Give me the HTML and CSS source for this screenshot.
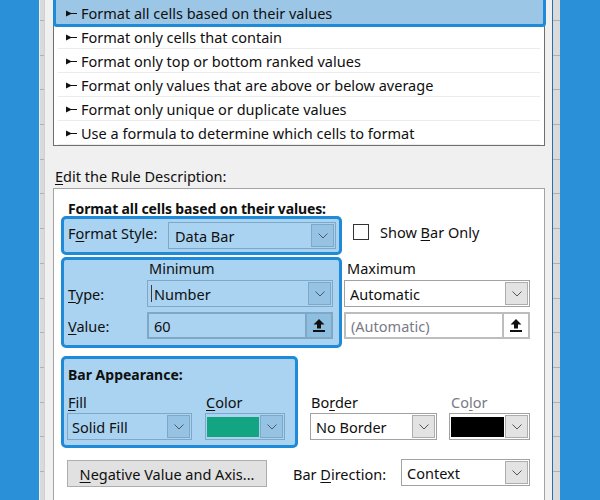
FILE: index.html
```html
<!DOCTYPE html>
<html>
<head>
<meta charset="utf-8">
<link rel="stylesheet" href="styles.css">
</head>
<body>
<div class="screen">
  <div class="bg-left"></div>
  <div class="strip strip-l"></div>
  <div class="dialog">
    <div class="list">
      <div class="row sel"><svg class="bullet" width="11" height="7" viewBox="0 0 11 7"><polygon points="0,0.5 5,3 11,3 11,4 5,4 0,6.5" fill="#111"/></svg><span>Format all cells based on their values</span></div>
      <div class="row"><svg class="bullet" width="11" height="7" viewBox="0 0 11 7"><polygon points="0,0.5 5,3 11,3 11,4 5,4 0,6.5" fill="#111"/></svg><span>Format only cells that contain</span></div>
      <div class="row"><svg class="bullet" width="11" height="7" viewBox="0 0 11 7"><polygon points="0,0.5 5,3 11,3 11,4 5,4 0,6.5" fill="#111"/></svg><span>Format only top or bottom ranked values</span></div>
      <div class="row"><svg class="bullet" width="11" height="7" viewBox="0 0 11 7"><polygon points="0,0.5 5,3 11,3 11,4 5,4 0,6.5" fill="#111"/></svg><span>Format only values that are above or below average</span></div>
      <div class="row"><svg class="bullet" width="11" height="7" viewBox="0 0 11 7"><polygon points="0,0.5 5,3 11,3 11,4 5,4 0,6.5" fill="#111"/></svg><span>Format only unique or duplicate values</span></div>
      <div class="row"><svg class="bullet" width="11" height="7" viewBox="0 0 11 7"><polygon points="0,0.5 5,3 11,3 11,4 5,4 0,6.5" fill="#111"/></svg><span>Use a formula to determine which cells to format</span></div>
    </div>

    <div class="section-label"><u>E</u>dit the Rule Description:</div>

    <div class="rule-box">
      <div class="title">Format all cells based on their values:</div>

      <div class="line line1">
        <div class="hl hl-style">
          <span class="lbl-style">F<u>o</u>rmat Style:</span>
          <div class="combo in-hl w-style"><span class="val">Data Bar</span><span class="dd"><svg width="10" height="6" viewBox="0 0 10 6"><polyline points="0.5,0.5 5,5 9.5,0.5" fill="none" stroke="#4d5a66" stroke-width="1"/></svg></span></div>
        </div>
        <div class="chk"><span class="box"></span><span>Show <u>B</u>ar Only</span></div>
      </div>

      <div class="line line2">
        <div class="hl hl-min">
          <div class="hdr hdr-min">Minimum</div>
          <div class="frow r1"><span class="flbl"><u>T</u>ype:</span><div class="combo in-hl w-field"><span class="caret"></span><span class="val val-num">Number</span><span class="dd"><svg width="10" height="6" viewBox="0 0 10 6"><polyline points="0.5,0.5 5,5 9.5,0.5" fill="none" stroke="#4d5a66" stroke-width="1"/></svg></span></div></div>
          <div class="frow r2"><span class="flbl"><u>V</u>alue:</span><div class="field in-hl w-field"><span class="val">60</span><span class="up"><svg width="12" height="13" viewBox="0 0 12 13"><polygon points="6,0 11.5,5.5 8,5.5 8,9.5 4,9.5 4,5.5 0.5,5.5" fill="#111"/><rect x="0" y="11" width="12" height="2" fill="#111"/></svg></span></div></div>
        </div>
        <div class="maxcol">
          <div class="hdr hdr-max">Maximum</div>
          <div class="combo w-field r1"><span class="val">Automatic</span><span class="dd"><svg width="10" height="6" viewBox="0 0 10 6"><polyline points="0.5,0.5 5,5 9.5,0.5" fill="none" stroke="#555" stroke-width="1"/></svg></span></div>
          <div class="field w-field r2"><span class="val disabled">(Automatic)</span><span class="up"><svg width="12" height="13" viewBox="0 0 12 13"><polygon points="6,0 11.5,5.5 8,5.5 8,9.5 4,9.5 4,5.5 0.5,5.5" fill="#111"/><rect x="0" y="11" width="12" height="2" fill="#111"/></svg></span></div>
        </div>
      </div>

      <div class="line line3">
        <div class="hl hl-bar">
          <div class="bold-lbl">Bar Appearance:</div>
          <div class="cols">
            <div class="col">
              <div class="clbl"><u>F</u>ill</div>
              <div class="combo in-hl w-fill"><span class="val val-fill">Solid Fill</span><span class="dd"><svg width="10" height="6" viewBox="0 0 10 6"><polyline points="0.5,0.5 5,5 9.5,0.5" fill="none" stroke="#4d5a66" stroke-width="1"/></svg></span></div>
            </div>
            <div class="col">
              <div class="clbl"><u>C</u>olor</div>
              <div class="combo in-hl w-color"><span class="swatch green"></span><span class="dd"><svg width="10" height="6" viewBox="0 0 10 6"><polyline points="0.5,0.5 5,5 9.5,0.5" fill="none" stroke="#4d5a66" stroke-width="1"/></svg></span></div>
            </div>
          </div>
        </div>
        <div class="col side side-border">
          <div class="clbl">Bo<u>r</u>der</div>
          <div class="combo w-border"><span class="val">No Border</span><span class="dd"><svg width="10" height="6" viewBox="0 0 10 6"><polyline points="0.5,0.5 5,5 9.5,0.5" fill="none" stroke="#555" stroke-width="1"/></svg></span></div>
        </div>
        <div class="col side side-color">
          <div class="clbl disabled">Co<u>l</u>or</div>
          <div class="combo w-bcolor"><span class="swatch black"></span><span class="dd"><svg width="10" height="6" viewBox="0 0 10 6"><polyline points="0.5,0.5 5,5 9.5,0.5" fill="none" stroke="#555" stroke-width="1"/></svg></span></div>
        </div>
      </div>

      <div class="line line4">
        <div class="button"><u>N</u>egative Value and Axis...</div>
        <span class="dir-lbl">Bar <u>D</u>irection:</span>
        <div class="combo w-dir"><span class="val">Context</span><span class="dd"><svg width="10" height="6" viewBox="0 0 10 6"><polyline points="0.5,0.5 5,5 9.5,0.5" fill="none" stroke="#555" stroke-width="1"/></svg></span></div>
      </div>
    </div>
  </div>
  <div class="strip strip-r"></div>
  <div class="bg-right"></div>
</div>
</body>
</html>
```
FILE: styles.css
```css
html, body {
  margin: 0;
  padding: 0;
}
body {
  width: 600px;
  height: 500px;
  overflow: hidden;
  background: #2a90d7;
  font-family: "Noto Sans", "Open Sans", sans-serif;
  font-size: 14.5px;
  color: #0f0f0f;
}
u {
  text-decoration: underline;
  text-underline-offset: 2px;
  text-decoration-thickness: 1px;
}
.screen {
  display: flex;
  height: 500px;
}
.bg-left {
  width: 39px;
  background: #2a90d7;
}
.bg-right {
  flex: 1;
  background: #2a90d7;
}
.strip {
  background: repeating-linear-gradient(to bottom, #dadada 0, #dadada 20px, #b0b0b0 20px, #b0b0b0 21px, #dadada 21px, #dadada 34.7px);
}
.strip-l {
  width: 4px;
  border-left: 1px solid #eeeeee;
  border-right: 1px solid #d0d0d0;
}
.strip-r {
  width: 7px;
  border-left: 1px solid #2270b0;
}
.dialog {
  width: 507px;
  box-sizing: border-box;
  background: #f0f0f0;
  padding-left: 8px;
}

/* rule type list */
.list {
  width: 492px;
  box-sizing: border-box;
  background: #fff;
  border: 1px solid #6f6f6f;
  border-top-color: #a0a0a0;
}
.row {
  height: 24px;
  box-sizing: border-box;
  display: flex;
  align-items: center;
  padding-left: 12px;
  white-space: nowrap;
  background: linear-gradient(#ececec, #ececec) no-repeat 4px 100% / calc(100% - 8px) 1px;
}
.row .bullet {
  margin-right: 4px;
  flex: none;
}
.row.sel {
  height: 32px;
  margin: -6px -2px -2px -1px;
  padding: 4px 0 0 10px;
  border: 3px solid #1e8ad8;
  border-radius: 4px;
  background: #9cc6e6;
}

.section-label {
  margin-top: 22px;
  line-height: 16px;
  padding-left: 2px;
}

/* rule description */
.rule-box {
  margin-top: 4px;
  width: 492px;
  height: 330px;
  box-sizing: border-box;
  background: #fff;
  border: 1px solid #a3a3a3;
  padding: 0 7px;
}
.title {
  margin-top: 12px;
  line-height: 15px;
  padding-left: 7px;
  font-weight: bold;
  font-size: 14px;
  letter-spacing: -0.12px;
  white-space: nowrap;
}
.line {
  display: flex;
}
.hl {
  box-sizing: border-box;
  border: 3px solid #1e8ad8;
  border-radius: 5px;
  background: #a9d3f1;
}

/* combos and fields */
.combo, .field {
  height: 27px;
  box-sizing: border-box;
  display: flex;
  align-items: center;
  background: #fff;
  border: 1px solid #a2a2a2;
  flex: none;
}
.field {
  border: 2px solid #bdbdbd;
}
.combo .val, .field .val {
  flex: 1;
  padding-left: 5px;
  white-space: nowrap;
}
.dd {
  width: 23px;
  height: 23px;
  box-sizing: border-box;
  margin-right: 1px;
  background: #e3e3e3;
  border: 1px solid #adadad;
  display: flex;
  align-items: center;
  justify-content: center;
}
.up {
  width: 26px;
  align-self: stretch;
  box-sizing: border-box;
  border-left: 2px solid #bdbdbd;
  background: #fff;
  display: flex;
  align-items: center;
  justify-content: center;
}
.combo.in-hl, .field.in-hl {
  background: #a9d3f1;
  border-color: #7fa8c6;
}
.in-hl .dd {
  background: #96c3e3;
  border-color: #7fa8c6;
}
.in-hl .up {
  background: #8fbfe0;
  border-left-color: #7fa8c6;
}
.disabled {
  color: #7a7a86;
}
.caret {
  width: 1px;
  height: 17px;
  margin-left: 3px;
  background: #3a3a3a;
}
.val-num {
  padding-left: 2px !important;
}

/* line 1 */
.hl-style {
  width: 281px;
  height: 39px;
  display: flex;
  align-items: center;
  padding: 0 3px 0 4px;
}
.lbl-style {
  margin-bottom: 6px;
  white-space: nowrap;
}
.w-style {
  width: 168px;
  margin-left: auto;
}
.w-style .val {
  padding-left: 6px;
}
.chk {
  display: flex;
  align-items: center;
  height: 16px;
  margin: 8px 0 0 11px;
  gap: 11px;
  white-space: nowrap;
}
.chk .box {
  width: 16px;
  height: 16px;
  box-sizing: border-box;
  border: 1px solid #333;
  background: #fff;
}

/* line 2 */
.line2 {
  margin-top: 2px;
}
.hl-min {
  width: 281px;
  height: 91px;
  padding: 0 6px 0 4px;
}
.hdr {
  line-height: 16px;
  height: 16px;
}
.hdr-min {
  padding-left: 81px;
}
.hdr-max {
  padding-left: 3px;
}
.frow {
  display: flex;
  align-items: center;
}
.flbl {
  width: 79px;
}
.r1 {
  margin-top: 4px;
}
.r2 {
  margin-top: 5px;
}
.w-field {
  width: 186px;
}
.maxcol {
  width: 186px;
  margin-left: 2px;
  padding-top: 3px;
}

/* line 3 */
.line3 {
  margin-top: 8px;
  align-items: flex-start;
}
.hl-bar {
  width: 237px;
  height: 92px;
  padding: 8px 0 0 3px;
}
.bold-lbl {
  font-weight: bold;
  font-size: 14px;
  line-height: 16px;
  padding-left: 1px;
  white-space: nowrap;
}
.cols {
  display: flex;
  gap: 13px;
  margin-top: 11px;
}
.clbl {
  line-height: 16px;
  padding-left: 1px;
}
.col .combo {
  margin-top: 3px;
}
.w-fill {
  width: 125px;
}
.val-fill {
  padding-left: 4px !important;
}
.w-color {
  width: 80px;
}
.swatch {
  height: 20px;
  margin: 0 1px 0 1px;
  flex: 1;
}
.swatch.green {
  background: #13a582;
}
.swatch.black {
  background: #000;
}
.side {
  margin-top: 38px;
}
.side-border {
  margin-left: 12px;
}
.w-border {
  width: 127px;
}
.side-color {
  margin-left: 12px;
}
.side-color .clbl {
  padding-left: 2px;
}
.w-bcolor {
  width: 81px;
}

/* line 4 */
.line4 {
  margin-top: 12px;
  width: 469px;
  align-items: center;
}
.button {
  width: 200px;
  height: 27px;
  box-sizing: border-box;
  margin-left: 6px;
  background: #e1e1e1;
  border: 1px solid #adadad;
  display: flex;
  align-items: center;
  justify-content: center;
  white-space: nowrap;
}
.dir-lbl {
  margin-left: 26px;
  white-space: nowrap;
}
.w-dir {
  width: 129px;
  margin-left: auto;
  margin-top: -2px;
}
```
